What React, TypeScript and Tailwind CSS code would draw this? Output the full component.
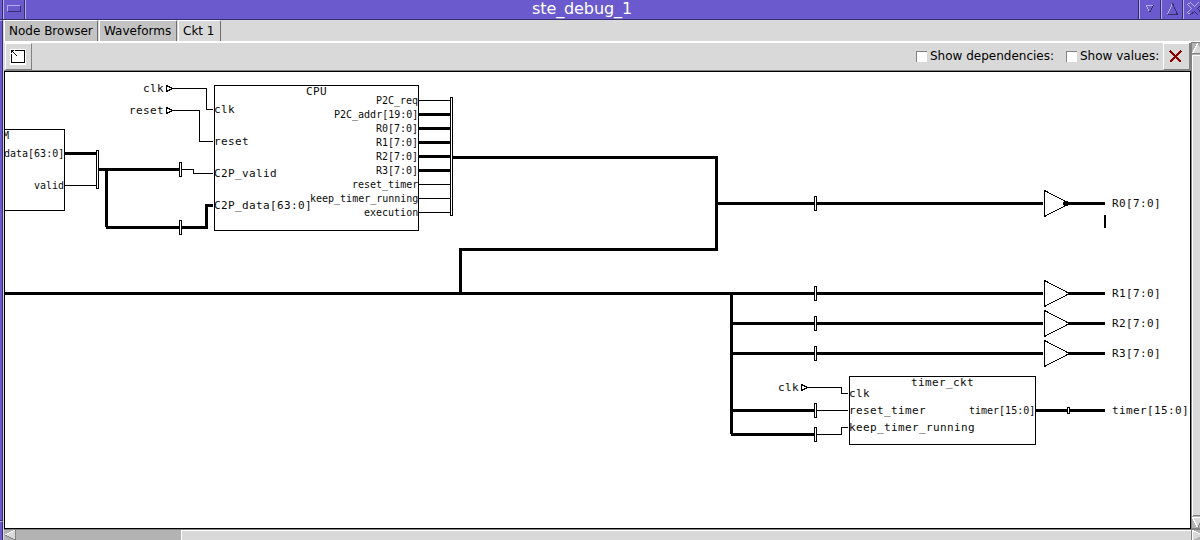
import type { ReactNode } from "react";

const MONO = "fill-[#0a0a0a] font-['DejaVu_Sans_Mono',monospace] select-none";

// Horizontal wire covering pixels x1..x2 inclusive, centred on row y.
function H({ x1, x2, y, w = 1 }: { x1: number; x2: number; y: number; w?: number }) {
  return <rect x={x1} y={y - (w - 1) / 2} width={x2 - x1 + 1} height={w} />;
}

// Vertical wire covering pixels y1..y2 inclusive, centred on column x.
function V({ x, y1, y2, w = 1 }: { x: number; y1: number; y2: number; w?: number }) {
  return <rect x={x - (w - 1) / 2} y={y1} width={w} height={y2 - y1 + 1} />;
}

function Box({ x1, y1, x2, y2 }: { x1: number; y1: number; x2: number; y2: number }) {
  return <rect x={x1 + 0.5} y={y1 + 0.5} width={x2 - x1} height={y2 - y1} fill="white" stroke="black" />;
}

function Big({ x, y, children }: { x: number; y: number; children: string }) {
  return (
    <text x={x} y={y + 4} className={MONO} fontSize="11" textLength={children.length * 7 - 0.4} lengthAdjust="spacing">
      {children}
    </text>
  );
}

function Small({ x, y, children }: { x: number; y: number; children: string }) {
  return (
    <text x={x - children.length * 6} y={y + 4} className={MONO} fontSize="10">
      {children}
    </text>
  );
}

function Port({ x, y }: { x: number; y: number }) {
  return <path d={`M${x + 0.5} ${y - 2.5}V${y + 3.5}L${x + 6.5} ${y + 0.5}Z`} fill="white" stroke="black" />;
}

function Buffer({ y }: { y: number }) {
  return (
    <g>
      <H x1={817} x2={1042} y={y} w={3} />
      <H x1={1069} x2={1104} y={y} w={3} />
      <Box x1={814} x2={816} y1={y - 7} y2={y + 7} />
      <path d={`M1044.5 ${y - 12.5}V${y + 13.5}L1069.5 ${y + 0.5}Z`} fill="white" stroke="black" />
    </g>
  );
}

const cpuOutputs: [string, boolean][] = [
  ["P2C_req", false],
  ["P2C_addr[19:0]", true],
  ["R0[7:0]", true],
  ["R1[7:0]", true],
  ["R2[7:0]", true],
  ["R3[7:0]", true],
  ["reset_timer", false],
  ["keep_timer_running", false],
  ["execution", false],
];

function Circuit() {
  return (
    <svg className="block h-[456px] w-[1185px]" viewBox="5 72 1185 456" shapeRendering="crispEdges">
      <Box x1={-20} y1={129} x2={64} y2={210} />
      <Small x={9} y={135}>M</Small>
      <Small x={64} y={153}>data[63:0]</Small>
      <Small x={64} y={185}>valid</Small>
      <H x1={65} x2={96} y={153} w={3} />
      <H x1={65} x2={96} y={185} />
      <Box x1={96} x2={98} y1={150} y2={188} />
      <H x1={99} x2={178} y={169} w={3} />
      <V x={106} y1={168} y2={226} w={3} />
      <H x1={106} x2={178} y={227} w={3} />
      <Box x1={179} x2={181} y1={162} y2={176} />
      <Box x1={179} x2={181} y1={220} y2={234} />
      <H x1={182} x2={193} y={169} />
      <V x={193} y1={169} y2={173} />
      <H x1={193} x2={212} y={173} />
      <H x1={182} x2={207} y={227} w={3} />
      <V x={206} y1={204} y2={228} w={3} />
      <H x1={205} x2={212} y={205} w={3} />

      <Big x={143} y={88}>clk</Big>
      <H x1={172} x2={206} y={88} />
      <Port x={166} y={88} />
      <V x={206} y1={88} y2={109} />
      <H x1={206} x2={212} y={109} />
      <Big x={129} y={110}>reset</Big>
      <H x1={172} x2={199} y={110} />
      <Port x={166} y={110} />
      <V x={199} y1={110} y2={141} />
      <H x1={199} x2={212} y={141} />

      <Box x1={214} x2={418} y1={85} y2={230} />
      <Big x={306} y={91}>CPU</Big>
      <Big x={214} y={109}>clk</Big>
      <Big x={214} y={141}>reset</Big>
      <Big x={214} y={173}>C2P_valid</Big>
      <Big x={214} y={205}>C2P_data[63:0]</Big>
      {cpuOutputs.map(([name, bus], i) => (
        <g key={name}>
          <Small x={418} y={100 + i * 14}>{name}</Small>
          <H x1={419} x2={450} y={100 + i * 14} w={bus ? 3 : 1} />
        </g>
      ))}
      <Box x1={450} x2={452} y1={97} y2={215} />

      <H x1={453} x2={717} y={157} w={3} />
      <V x={716} y1={156} y2={250} w={3} />
      <H x1={459} x2={717} y={249} w={3} />
      <V x={460} y1={248} y2={293} w={3} />
      <H x1={5} x2={813} y={293} w={3} />
      <H x1={718} x2={813} y={203} w={3} />
      <V x={731} y1={294} y2={433} w={3} />
      <H x1={731} x2={813} y={323} w={3} />
      <H x1={731} x2={813} y={353} w={3} />
      <H x1={731} x2={813} y={410} w={3} />
      <H x1={731} x2={813} y={434} w={3} />

      {[203, 293, 323, 353].map((y, i) => (
        <g key={y}>
          <Buffer y={y} />
          <Big x={1112} y={y}>{`R${i}[7:0]`}</Big>
        </g>
      ))}
      <rect x="1064" y="201" width="4" height="5" />
      <rect x="1063" y="202" width="7" height="3" />
      <rect x="1104" y="215" width="2" height="13" />

      <Box x1={814} x2={816} y1={403} y2={417} />
      <Box x1={814} x2={816} y1={427} y2={441} />
      <H x1={817} x2={847} y={410} />
      <H x1={817} x2={841} y={434} />
      <V x={841} y1={427} y2={434} />
      <H x1={841} x2={847} y={427} />
      <Big x={778} y={387}>clk</Big>
      <H x1={807} x2={841} y={387} />
      <Port x={801} y={387} />
      <V x={841} y1={387} y2={393} />
      <H x1={841} x2={847} y={393} />

      <Box x1={849} x2={1035} y1={376} y2={444} />
      <Big x={911} y={382}>timer_ckt</Big>
      <Big x={849} y={393}>clk</Big>
      <Big x={849} y={410}>reset_timer</Big>
      <Big x={849} y={427}>keep_timer_running</Big>
      <Small x={1035} y={410}>timer[15:0]</Small>
      <H x1={1036} x2={1104} y={410} w={3} />
      <Box x1={1067} x2={1069} y1={407} y2={413} />
      <Big x={1112} y={410}>timer[15:0]</Big>
    </svg>
  );
}

function TitleBar() {
  return (
    <div className="flex h-5 w-[1200px] border-b border-[#362d6b] bg-[#6a5acd]">
      <div className="h-full w-[3px] border-r border-[#362d6b]" />
      <div className="h-full w-[22px] border-x border-l-[#b4acec] border-r-[#362d6b] pt-[5px] pl-[3px]">
        <div className="h-[7px] w-[14px] border border-t-[#b4acec] border-r-[#362d6b] border-b-[#362d6b] border-l-[#b4acec]" />
      </div>
      <div className="flex h-full w-[1114px] items-center justify-center border-x border-l-[#b4acec] border-r-[#362d6b] pb-[2px] text-[16px] leading-[16px] tracking-[-0.1px] text-white">
        <span className="whitespace-pre">ste_debug_1</span>
      </div>
      <svg className="h-[19px] w-[61px]" viewBox="1139 0 61 19" fill="none" shapeRendering="crispEdges">
        <path d="M1139.5 0V19M1161.5 0V19M1183.5 0V19" stroke="#b4acec" />
        <path d="M1160.5 0V19M1182.5 0V19" stroke="#362d6b" />
        <path d="M1153.5 5.5H1146.5L1149.5 12.5" stroke="#b4acec" />
        <path d="M1153.5 5.5L1149.5 12.5" stroke="#362d6b" />
        <path d="M1172.5 3.5L1167.5 14.5" stroke="#b4acec" />
        <path d="M1172.5 3.5L1177.5 14.5H1167.5" stroke="#362d6b" />
        <path d="M1190.5 14.5L1187.5 12.5L1191.5 8.5L1187.5 4.5L1190.5 2.5L1194.5 6.5L1198.5 2.5" stroke="#b4acec" />
        <path d="M1190.5 14.5L1194.5 11.5L1198.5 15.5M1201 5.5L1197.5 8.5L1201 12.5" stroke="#362d6b" />
      </svg>
    </div>
  );
}

function Tab({ children, className }: { children: ReactNode; className: string }) {
  return (
    <div className={`flex h-[21px] items-center rounded-tr-[2px] border-t border-r border-l border-t-white border-r-[#6e6e6e] border-l-white pl-1 whitespace-pre ${className}`}>
      {children}
    </div>
  );
}

function Check({ children, className }: { children: string; className: string }) {
  return (
    <div className={`flex items-center ${className}`}>
      <span className="mr-[3px] h-[11px] w-[11px] border-t border-l border-[#828282] bg-white" />
      <span className="pb-[2px] whitespace-pre">{children}</span>
    </div>
  );
}

function VerticalScroll() {
  return (
    <svg className="block h-[498px] w-[9px]" viewBox="1191 42 9 498" shapeRendering="crispEdges">
      <rect x="1191" y="42" width="9" height="498" fill="#b3b3b3" />
      <rect x="1191" y="42" width="1" height="498" fill="#828282" />
      <rect x="1191" y="42" width="9" height="1" fill="#828282" />
      <path d="M1192 54L1197.5 43L1203 54Z" fill="#d9d9d9" />
      <path d="M1192.5 53.5L1197.5 43.5" stroke="white" strokeWidth="1.5" />
      <path d="M1192 53.5H1200" stroke="#828282" />
      <rect x="1192" y="55" width="8" height="461" fill="#d9d9d9" />
      <path d="M1192.5 516V55.5H1200" fill="none" stroke="white" />
      <path d="M1193 515.5H1200" stroke="#828282" />
      <path d="M1192 517.5H1202L1197 527.5Z" fill="#d9d9d9" />
      <path d="M1202 517.5H1192.5L1197.5 527.5" fill="none" stroke="white" />
      <path d="M1198 527.5L1202 518" stroke="#828282" />
      <rect x="1191" y="528" width="9" height="2" fill="#828282" />
      <path d="M1193 530L1203 535L1193 540Z" fill="#d9d9d9" />
      <path d="M1192.5 540V530.5L1202 535" fill="none" stroke="white" />
    </svg>
  );
}

export default function App() {
  return (
    <main className="flex h-[540px] w-[1200px] flex-col overflow-hidden bg-[#d9d9d9] font-['DejaVu_Sans',sans-serif] text-[12px] leading-[14px] text-black">
      <TitleBar />
      <div className="flex h-[520px]">
        <aside className="flex h-full w-1 flex-col border-r border-[#d9d9d9]">
          <div className="h-[501px] border-t border-r border-b border-t-[#b4acec] border-r-[#362d6b] border-b-[#362d6b] bg-[#6a5acd]" />
          <div className="grow border-t border-r border-t-[#b4acec] border-r-[#362d6b] bg-[#6a5acd]" />
        </aside>
        <div className="flex w-[1196px] flex-col">
          <nav className="flex h-[21px]">
            <Tab className="w-[94px] bg-[#c3c3c3]">Node Browser</Tab>
            <Tab className="ml-px w-[78px] bg-[#c3c3c3]">Waveforms</Tab>
            <Tab className="ml-px w-[43px] bg-[#d9d9d9]">Ckt 1</Tab>
          </nav>
          <div className="h-px bg-white" />
          <div className="flex h-[498px]">
            <div className="w-[1187px]">
              <header className="flex h-[29px] items-stretch border-t border-b border-t-white border-b-[#828282]">
                <button className="ml-px flex h-[27px] w-[27px] items-start border border-t-white border-r-[#828282] border-b-[#828282] border-l-white pt-[5px] pl-[4px]" aria-label="Zoom">
                  <svg className="h-4 w-4" viewBox="0 0 16 16" fill="none" shapeRendering="crispEdges">
                    <rect width="16" height="16" fill="white" />
                    <path d="M5 1.5H14.5V13.5H1.5V5" stroke="black" />
                    <path d="M1 1.5H4M1.5 1V4M2 2L7 7" stroke="black" />
                  </svg>
                </button>
                <div className="grow" />
                <Check className="w-[150px]">Show dependencies:</Check>
                <Check className="w-[97px]">Show values:</Check>
                <button className="flex h-[27px] w-[26px] items-start border-t border-b border-l border-t-white border-b-[#828282] border-l-white pt-[6px] pl-[5px]" aria-label="Close">
                  <svg className="h-[13px] w-[13px]" viewBox="0 0 13 13" fill="none">
                    <path d="M1 1L12 12M12 1L1 12" stroke="#8b0000" strokeWidth="1.8" shapeRendering="crispEdges" />
                  </svg>
                </button>
                <div className="w-[2px] bg-[#828282]" />
              </header>
              <section className="h-[458px] w-[1187px] border border-black bg-white">
                <Circuit />
              </section>
              <div className="flex h-[11px] border-t border-[#828282] bg-[#b3b3b3]">
                <svg className="h-[10px] w-[177px]" viewBox="4 530 177 10" shapeRendering="crispEdges">
                  <path d="M5 535L15.5 530V540Z" fill="#d9d9d9" />
                  <path d="M5 535L15 530" stroke="white" />
                  <path d="M5 535L15 540M15.5 530V540" stroke="#828282" />
                </svg>
                <div className="grow border-t border-l border-white bg-[#d9d9d9]" />
              </div>
            </div>
            <VerticalScroll />
          </div>
        </div>
      </div>
    </main>
  );
}
